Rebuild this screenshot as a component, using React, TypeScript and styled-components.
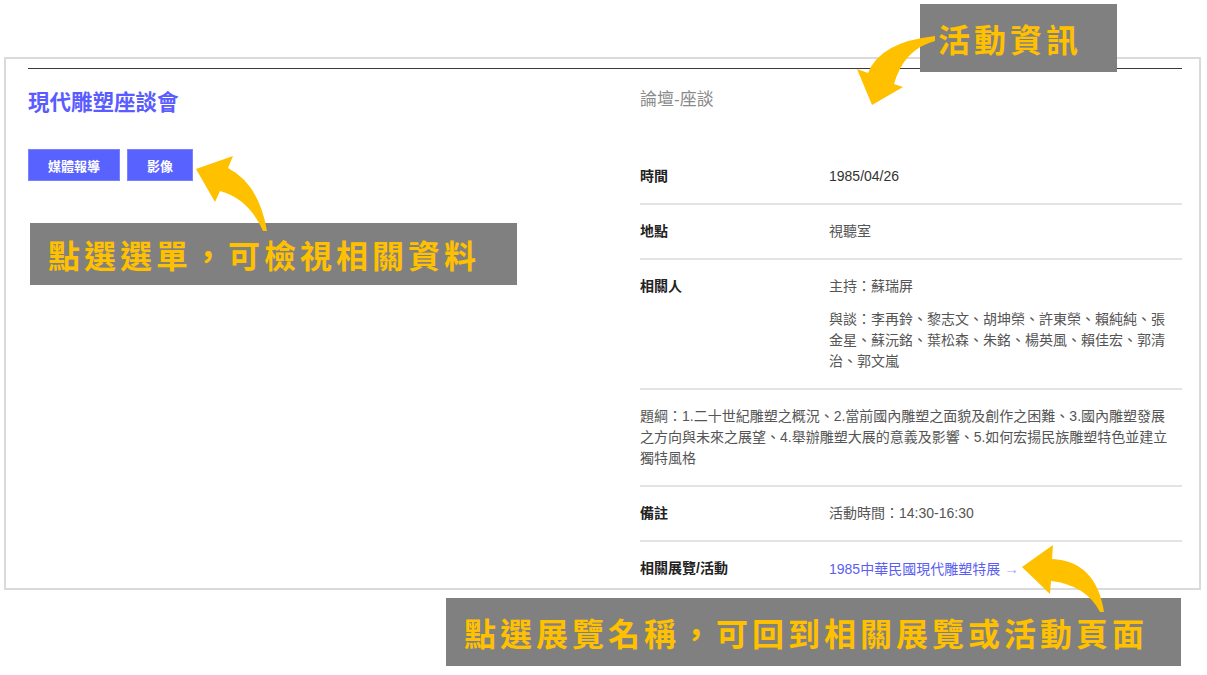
import React from 'react'
import styled, { createGlobalStyle } from 'styled-components'

const GlobalStyle = createGlobalStyle`
  html, body {
    margin: 0;
    padding: 0;
    background: #fff;
  }
  body {
    font-family: 'Liberation Sans', 'Noto Sans CJK TC', sans-serif;
    color: #333;
  }
`

const people = {
  host: '主持：蘇瑞屏',
  panel:
    '與談：李再鈴、黎志文、胡坤榮、許東榮、賴純純、張金星、蘇沅銘、葉松森、朱銘、楊英風、賴佳宏、郭清治、郭文嵐',
}

const outline =
  '題綱：1.二十世紀雕塑之概況、2.當前國內雕塑之面貌及創作之困難、3.國內雕塑發展之方向與未來之展望、4.舉辦雕塑大展的意義及影響、5.如何宏揚民族雕塑特色並建立獨特風格'

const notes = [
  { text: '活動資訊', top: 4, left: 920, width: 197, height: 68 },
  { text: '點選選單，可檢視相關資料', top: 223, left: 30, width: 487, height: 62 },
  {
    text: '點選展覽名稱，可回到相關展覽或活動頁面',
    top: 598,
    left: 446,
    width: 735,
    height: 68,
  },
]

const App = () => {
  return (
    <Page>
      <GlobalStyle />
      <Frame>
        <Inner>
          <Columns>
            <LeftCol>
              <Title>現代雕塑座談會</Title>
              <Tabs>
                <TabButton>媒體報導</TabButton>
                <TabButton>影像</TabButton>
              </Tabs>
            </LeftCol>
            <RightCol>
              <Category>論壇-座談</Category>
              <InfoList>
                <Row>
                  <Label>時間</Label>
                  <Value dark>1985/04/26</Value>
                </Row>
                <Row>
                  <Label>地點</Label>
                  <Value>視聽室</Value>
                </Row>
                <Row>
                  <Label>相關人</Label>
                  <div>
                    <Value>{people.host}</Value>
                    <Value spaced>{people.panel}</Value>
                  </div>
                </Row>
                <Row full>
                  <Value>{outline}</Value>
                </Row>
                <Row>
                  <Label>備註</Label>
                  <Value>活動時間：14:30-16:30</Value>
                </Row>
                <Row last>
                  <Label>相關展覽/活動</Label>
                  <Value>
                    <RelatedLink href="#">
                      1985中華民國現代雕塑特展 <LinkArrow>→</LinkArrow>
                    </RelatedLink>
                  </Value>
                </Row>
              </InfoList>
            </RightCol>
          </Columns>
        </Inner>
      </Frame>

      {notes.map((n, i) => (
        <Callout
          key={i}
          style={{ top: n.top, left: n.left, width: n.width, height: n.height }}
        >
          {n.text}
        </Callout>
      ))}

      <Arrows viewBox="0 0 1207 675" width="1207" height="675">
        {/* toward the tab buttons */}
        <path
          d="M196,169 L233,156 L228,168 Q259,184 267,231 L263,231 Q249,199 220,191 L215,202 Z"
          fill="#FFC000"
        />
        {/* toward the category */}
        <path
          d="M872,105 L857,69 L868,73 Q880,42 935,36 L935,41 Q904,49 894,84 L903,87 Z"
          fill="#FFC000"
        />
        {/* toward the related exhibition link */}
        <path
          d="M1022,567 L1053,545 L1052,559 Q1096,561 1104,612 L1100,612 Q1086,585 1051,581 L1050,594 Z"
          fill="#FFC000"
        />
      </Arrows>
    </Page>
  )
}

export default App

const Page = styled.div`
  position: relative;
  width: 1207px;
  height: 675px;
  overflow: hidden;
  padding-top: 57px;
  box-sizing: border-box;
`
const Frame = styled.div`
  margin-left: 4px;
  width: 1197px;
  height: 533px;
  border: 2px solid #dadada;
  box-sizing: border-box;
  overflow: hidden;
  background: #fff;
`
const Inner = styled.div`
  padding: 9px 17px 0 22px;
`
const Columns = styled.div`
  display: grid;
  grid-template-columns: 612px 1fr;
  border-top: 1px solid #3a3a3a;
`
const LeftCol = styled.div`
  padding-top: 20px;
`
const Title = styled.h1`
  margin: 0;
  font-size: 21.5px;
  line-height: 28px;
  font-weight: 700;
  color: #5a5cff;
`
const Tabs = styled.div`
  display: flex;
  gap: 7px;
  margin-top: 32px;
`
const TabButton = styled.button`
  height: 32px;
  padding: 0 19px;
  border: 1px solid #7b82ff;
  background: #5862ff;
  color: #fff;
  font-family: inherit;
  font-size: 13px;
  font-weight: 700;
  cursor: pointer;
`
const RightCol = styled.div`
  padding-top: 19px;
`
const Category = styled.div`
  font-size: 17px;
  line-height: 24px;
  color: #8a8a8a;
`
const InfoList = styled.div`
  margin-top: 38px;
`
const Row = styled.div<{ full?: boolean; last?: boolean }>`
  display: grid;
  grid-template-columns: ${(p) => (p.full ? '1fr' : '189px 1fr')};
  padding: 16px 8px 16px 0;
  border-bottom: ${(p) => (p.last ? 'none' : '2px solid #e3e3e3')};
`
const Label = styled.div`
  font-size: 14px;
  line-height: 21px;
  font-weight: 700;
  color: #222;
`
const Value = styled.p<{ dark?: boolean; spaced?: boolean }>`
  margin: ${(p) => (p.spaced ? '12px 0 0' : '0')};
  font-size: 14px;
  line-height: 21px;
  color: ${(p) => (p.dark ? '#333' : '#555')};
`
const RelatedLink = styled.a`
  color: #5b5ef0;
  text-decoration: none;
`
const LinkArrow = styled.span`
  color: #a3a6ff;
  font-size: 15px;
`
const Callout = styled.div`
  position: absolute;
  box-sizing: border-box;
  display: flex;
  align-items: center;
  padding: 0 18px;
  background: #808080;
  color: #ffc000;
  font-family: 'Noto Sans CJK TC', sans-serif;
  font-size: 32px;
  font-weight: 700;
  letter-spacing: 4px;
  white-space: nowrap;
`
const Arrows = styled.svg`
  position: absolute;
  top: 0;
  left: 0;
  pointer-events: none;
`
